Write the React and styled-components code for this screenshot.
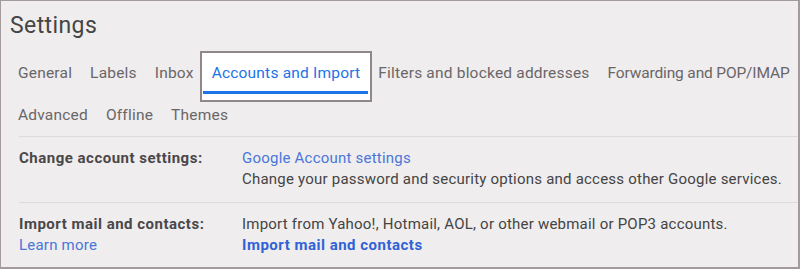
import React from "react";
import styled, { createGlobalStyle } from "styled-components";

const Global = createGlobalStyle`
  html, body { margin: 0; padding: 0; background: #efedee; }
  body { font-family: Roboto, "Noto Sans", Arial, sans-serif; }
`;

const Frame = styled.div`
  box-sizing: border-box;
  width: 800px;
  height: 269px;
  background: #efedee;
  border-style: solid;
  border-color: #a39a9e;
  border-width: 1px 2px 2px 1px;
  overflow: hidden;
`;

const Title = styled.h1`
  margin: 0;
  padding: 10px 0 0 9px;
  height: 42px;
  box-sizing: border-box;
  font-size: 23px;
  font-weight: 400;
  letter-spacing: 0.4px;
  color: #444;
  line-height: 30px;
`;

const Tabs = styled.nav`
  display: flex;
  flex-wrap: wrap;
  column-gap: 18px;
  padding-left: 17px;
  margin-top: 9px;
`;

const Tab = styled.div`
  position: relative;
  height: 42px;
  display: flex;
  align-items: center;
  white-space: nowrap;
  font-size: 15.5px;
  letter-spacing: ${(p) => p.$tracking ?? 0.2}px;
  color: ${(p) => (p.$active ? "#1a73e8" : "#6a6668")};
  z-index: 0;
  ${(p) =>
    p.$active &&
    `
    &::before {
      content: "";
      position: absolute;
      left: -12px; right: -12px; top: -1px; bottom: -8px;
      background: #fff;
      border: 2px solid #8f878a;
      z-index: -1;
    }
    &::after {
      content: "";
      position: absolute;
      left: -9px; right: -8px; bottom: 0;
      height: 3px;
      background: #1a73e8;
    }
  `}
`;

const Divider = styled.div`
  height: 1px;
  background: #dddadb;
  margin-left: 18px;
`;

const Row = styled.div`
  display: grid;
  grid-template-columns: 223px 1fr;
  padding: 11px 0 12px 18px;
  font-size: 15px;
  letter-spacing: 0.22px;
  line-height: 21px;
  color: #444;
`;

const Label = styled.div`
  display: flex;
  flex-direction: column;
  align-items: flex-start;
`;

const LabelText = styled.span`
  font-weight: 700;
  letter-spacing: 0.5px;
  color: #4a4748;
`;

const Value = styled.div`
  display: flex;
  flex-direction: column;
  align-items: flex-start;
`;

const Link = styled.a`
  color: ${(p) => (p.$strong ? "#2f63d6" : "#4a76d8")};
  font-weight: ${(p) => (p.$strong ? 700 : 400)};
  letter-spacing: ${(p) => (p.$strong ? "0.5px" : "0.22px")};
  text-decoration: none;
  cursor: pointer;
`;

const tabs = [
  { label: "General" },
  { label: "Labels" },
  { label: "Inbox" },
  { label: "Accounts and Import", active: true },
  { label: "Filters and blocked addresses" },
  { label: "Forwarding and POP/IMAP", tracking: -0.15 },
  { label: "Advanced" },
  { label: "Offline" },
  { label: "Themes" },
];

export default function App() {
  return (
    <>
      <Global />
      <Frame>
        <Title>Settings</Title>
        <Tabs>
          {tabs.map((t) => (
            <Tab key={t.label} $active={t.active} $tracking={t.tracking}>
              {t.label}
            </Tab>
          ))}
        </Tabs>
        <Divider />
        <Row>
          <Label>
            <LabelText>Change account settings:</LabelText>
          </Label>
          <Value>
            <Link>Google Account settings</Link>
            <span>Change your password and security options and access other Google services.</span>
          </Value>
        </Row>
        <Divider />
        <Row>
          <Label>
            <LabelText>Import mail and contacts:</LabelText>
            <Link>Learn more</Link>
          </Label>
          <Value>
            <span>Import from Yahoo!, Hotmail, AOL, or other webmail or POP3 accounts.</span>
            <Link $strong>Import mail and contacts</Link>
          </Value>
        </Row>
      </Frame>
    </>
  );
}
